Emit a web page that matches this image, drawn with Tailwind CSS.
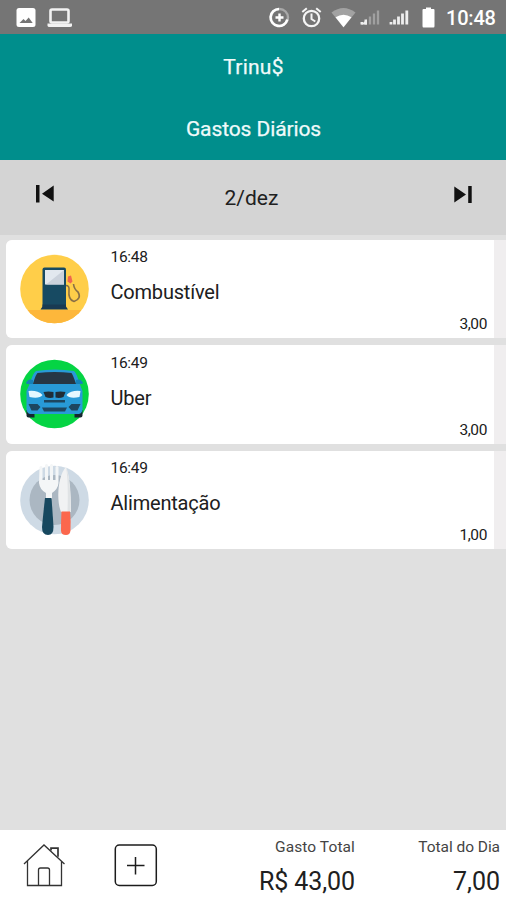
<!DOCTYPE html>
<html lang="pt-BR">
<head>
<meta charset="utf-8">
<title>Trinu$</title>
<script src="https://cdn.jsdelivr.net/npm/@tailwindcss/browser@4"></script>
</head>
<body class="w-[506px] h-[900px] overflow-hidden bg-[#e0e0e0] font-[Roboto,sans-serif] text-[#202020] flex flex-col">
<header class="h-[34px] shrink-0 bg-[#757575] text-white">
  <div class="flex h-full items-center justify-between">
  <svg class="w-[90px] h-[34px]" viewBox="0 0 90 34">
    <rect x="16.500" y="8" width="19" height="19" rx="2.500" fill="#fff"/>
    <path d="M19.500 23l4-4 2 2 3.200-3.500 4 5.500z" fill="#757575"/>
    <rect x="50.500" y="9.500" width="18" height="13" rx="1.500" fill="none" stroke="#f2f2f2" stroke-width="2.600"/>
    <path d="M47.500 23.500h24.500v2q0 1.500-2 1.500h-20.500q-2 0-2-1.500z" fill="#f2f2f2"/>
  </svg>
  <div class="flex items-center">
  <svg class="w-[182px] h-[34px]" viewBox="262 0 182 34" fill="none">
    <circle cx="279.500" cy="17.500" r="8.500" stroke="#a8a8a8" stroke-width="2.400"/>
    <path d="M279 9a8.500 8.500 0 1 0 8.300 10.500" stroke="#fff" stroke-width="2.600"/>
    <path d="M279.500 13.500v8M275.500 17.500h8" stroke="#fff" stroke-width="2.400"/>
    <circle cx="311.500" cy="18.500" r="7.700" stroke="#f5f5f5" stroke-width="2.300"/>
    <path d="M311.500 13.500v5.500l3.800 2.500M302.300 12l4.500-3.800M320.700 12l-4.500-3.800" stroke="#f5f5f5" stroke-width="2"/>
    <path d="M331.500 12.500q12-9 24 0l-12 15z" fill="#a2a2a2"/>
    <path d="M335.500 17.200q8-5 16 0l-8 10z" fill="#fff"/>
    <path d="M360.500 24.500v-2.500h2.500v2.500zM364.500 24.500v-5h2.500v5z" fill="#eee"/>
    <path d="M361 24.500l6-5v5z" fill="#eee"/>
    <path d="M370 24.500v-8M374 24.500v-11M378 24.500v-14" stroke="#a0a0a0" stroke-width="2.300"/>
    <path d="M391 24.500v-2.500M394.500 24.500v-5M398.500 24.500v-8M402.500 24.500v-11M406.800 24.500v-14" stroke="#eee" stroke-width="2.800"/>
    <path d="M426 9v-1.500h5v1.500h2.500q1 0 1 1v16q0 1.500-1 1.500h-10q-1 0-1-1.500v-16q0-1 1-1z" fill="#fff"/>
  </svg>
  <span class="w-[62px] pl-[2px] pt-[2px] text-[20px] leading-6 font-medium tracking-[-0.2px]">10:48</span>
  </div>
  </div>
</header>
<div class="h-[126px] shrink-0 bg-[#008e8c] text-[#f0fafa] leading-6 text-center pt-[21px] pl-[1px]">
  <h1 class="text-[21px] tracking-[0.25px] [-webkit-text-stroke:0.25px_#f0fafa]">Trinu$</h1>
  <h2 class="mt-[38px] text-[21px] tracking-[-0.1px] [-webkit-text-stroke:0.25px_#f0fafa]">Gastos Diários</h2>
</div>
<nav class="h-[75px] shrink-0 bg-[#d4d4d4] flex items-start justify-between pl-[35px] pr-[33px] pt-[24px]">
  <svg class="w-[20px] h-5" viewBox="0 0 20 20"><path d="M1 1h3.500v17.500H1zM18.700 1.500v16L7 9.700z" fill="#111"/></svg>
  <span class="text-[21px] leading-6 pt-[2px] pr-[5px] tracking-[0px]">2/dez</span>
  <svg class="w-[20px] h-5" viewBox="0 0 20 20"><path d="M1.300 2.500v16L13 10.500zM15.200 2h3.500v17h-3.500z" fill="#111"/></svg>
</nav>
<main class="flex-1 pl-[6px] pt-[4.500px] flex flex-col gap-[7px]">
  <article class="h-[98.500px] shrink-0 bg-[#f0eeef] rounded-l-[6px]"><div class="w-[488px] h-full bg-white rounded-l-[6px] flex">
    <svg class="w-[90px] h-[90px] ml-1 mt-[5px]" viewBox="0 0 90 90">
      <clipPath id="c1"><circle cx="44.500" cy="44" r="34.300"/></clipPath>
      <g clip-path="url(#c1)"><path d="M0 0h90v90H0z" fill="#ffce49"/><path d="M0 65h90v25H0z" fill="#fdb73b"/></g>
      <rect x="32.500" y="22.500" width="23.500" height="41" rx="2" fill="#174a62"/>
      <rect x="35" y="25" width="19" height="14.500" fill="#e2e8ef"/><path d="M54 25v14.500H36z" fill="#cbd2dc"/>
      <path d="M32.500 59.500h23.500v2l2 3H30.500l2-3z" fill="#183a52"/>
      <path d="M56 40.500q3.500 0 3 4.500-1 10 5 11.500 8-3 4-9.500-4-3-4.500-8" fill="none" stroke="#8a7046" stroke-width="1.600"/>
      <path d="M58 31.500l3-1 1.500 6-2 2-3-2z" fill="#ef6650"/>
    </svg>
    <div class="pl-[10.500px] pt-[8.500px] flex-1"><p class="text-[15.500px] leading-[18px] tracking-[-0.3px]">16:48</p><p class="mt-[14px] text-[20px] leading-6 tracking-[-0.2px]">Combustível</p><p class="mt-[12px] pr-[7px] text-right text-[15.500px] leading-[16px] tracking-[-0.4px]">3,00</p></div>
  </div></article>
  <article class="h-[98.500px] shrink-0 bg-[#f0eeef] rounded-l-[6px]"><div class="w-[488px] h-full bg-white rounded-l-[6px] flex">
    <svg class="w-[90px] h-[90px] ml-1 mt-[5px]" viewBox="0 0 90 90">
      <circle cx="44.500" cy="44" r="34.300" fill="#05d444"/>
      <path d="M16.500 60h8v7.500h-6q-2 0-2-2zM64.500 60h8v5.500q0 2-2 2h-6z" fill="#16262f"/>
      <path d="M26 21q19-3 38 0 3 3 5 11l3.500 9v19q-1 4-4 4h-48q-3 0-4-4V41l4-9q2-8 5.500-11z" fill="#289ad7"/>
      <path d="M16 33q2-5 7-3v4h-6zM73 33q-2-5-7-3v4h6z" fill="#1580b8"/>
      <path d="M27.500 23q17-2 34 0 2 3 4.500 11H23q2-8 4.500-11z" fill="#263644"/>
      <path d="M18.500 41q9-1 14 4-3 4-13 2zM70.500 41q-9-1-14 4 3 4 13 2z" fill="#e5f8ff"/>
      <path d="M33.500 42q5-1 10 0v5.500q-4 1-8-.5zM45.500 42q5-1 10 0l-2 5q-4 1.500-8 .5z" fill="#202d36"/>
      <path d="M34 50h21v2.500H34zM18.500 54h9l3 3-3 3.500h-6zM70.500 54h-9l-3 3 3 3.500h6zM32 57.500h25l-2 4H34z" fill="#1d4660"/>
    </svg>
    <div class="pl-[10.500px] pt-[9px] flex-1"><p class="text-[15.500px] leading-[18px] tracking-[-0.3px]">16:49</p><p class="mt-[14px] text-[20px] leading-6 tracking-[-0.2px]">Uber</p><p class="mt-[12px] pr-[7px] text-right text-[15.500px] leading-[16px] tracking-[-0.4px]">3,00</p></div>
  </div></article>
  <article class="h-[98.500px] shrink-0 bg-[#f0eeef] rounded-l-[6px]"><div class="w-[488px] h-full bg-white rounded-l-[6px] flex">
    <svg class="w-[90px] h-[90px] ml-1 mt-[5px]" viewBox="0 0 90 90">
      <circle cx="44.500" cy="44" r="34.300" fill="#cedae5"/>
      <circle cx="44.500" cy="44" r="25" fill="#abb7c2"/>
      <g transform="translate(9.500 0)">
      <path d="M20 11q1.500-2 3 0v13h2.500V9q1.500-2 3 0v15h2V9q1.500-2 3 0v15H36V11q1.500-2 3 0v16q-.5 6-6.500 10v6h-6v-6q-6-3-7-10z" fill="#f4f6f7"/>
      <path d="M25.500 42h6.500q1 13 2 29 0 8-5.500 8-6 0-6-8 1.500-16 3-29z" fill="#17485f"/>
      <path d="M41.500 56c-5-12-3-37 5-45q5 12 5 45z" fill="#f1f2f3"/><path d="M46.500 11q5 14 4.500 45h-3q1-32-1.500-45z" fill="#e0e3e5"/>
      <path d="M42 55.500h8.500q1 9 .5 19-.5 4.500-4.500 4.500-5 0-5-4.500 0-10 .5-19z" fill="#fb674d"/>
      </g>
    </svg>
    <div class="pl-[10.500px] pt-[8.500px] flex-1"><p class="text-[15.500px] leading-[18px] tracking-[-0.3px]">16:49</p><p class="mt-[14px] text-[20px] leading-6 tracking-[-0.2px]">Alimentação</p><p class="mt-[12px] pr-[7px] text-right text-[15.500px] leading-[16px] tracking-[-0.4px]">1,00</p></div>
  </div></article>
</main>
<footer class="h-[70px] shrink-0 bg-white flex">
  <svg class="w-[46px] h-[50px] ml-[22px] mt-[10px]" viewBox="22 840 46 50" fill="none" stroke="#333" stroke-width="1.300">
    <path d="M24 864L44 845 64.500 864M27.500 861v24.500h34V861M38.500 885.500V870q0-2 2-2h7q2 0 2 2v15.500"/><path d="M51 850.500v-2.300h7v8.500" stroke-width="1.700"/>
  </svg>
  <svg class="w-[46px] h-[50px] ml-[45px] mt-[10px]" viewBox="113 840 46 50" fill="none" stroke="#1c1c1c" stroke-width="1.500">
    <rect x="115.300" y="845" width="41" height="40.500" rx="4"/><path d="M135.500 857v17.500M127 865.500h17.500"/>
  </svg>
  <div class="ml-auto w-[140px] text-right pt-[8px]"><p class="text-[15.500px] leading-[18px] tracking-[0.1px] text-[#444]">Gasto Total</p><p class="mt-[11px] text-[25px] leading-[30px] tracking-[-0.1px]">R$ 43,00</p></div>
  <div class="w-[151px] pr-[6px] text-right pt-[8px]"><p class="text-[15.500px] leading-[18px] tracking-[-0.05px] text-[#444]">Total do Dia</p><p class="mt-[11px] text-[25px] leading-[30px] tracking-[0px]">7,00</p></div>
</footer>
</body>
</html>
